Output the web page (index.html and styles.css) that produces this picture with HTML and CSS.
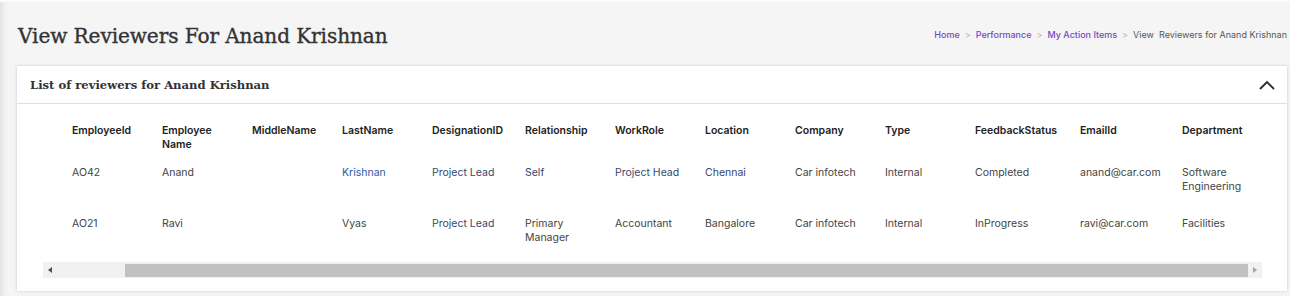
FILE: index.html
```html
<!DOCTYPE html>
<html>
<head>
<meta charset="utf-8">
<link rel="stylesheet" href="styles.css">
</head>
<body>
<div class="page">
  <div class="page-head">
    <h1 class="title">View Reviewers For Anand Krishnan</h1>
    <nav class="crumbs">
      <a class="crumb-link">Home</a><span class="sep">&gt;</span>
      <a class="crumb-link">Performance</a><span class="sep">&gt;</span>
      <a class="crumb-link">My Action Items</a><span class="sep">&gt;</span>
      <span class="crumb-current">View&nbsp; Reviewers for Anand Krishnan</span>
    </nav>
  </div>
  <section class="card">
    <header class="card-head">
      <h2 class="card-title">List of reviewers for Anand Krishnan</h2>
      <svg class="chev" width="16" height="10" viewBox="0 0 16 10"><path d="M1 9 L8 2 L15 9" fill="none" stroke="#2b2b2b" stroke-width="1.8"/></svg>
    </header>
    <div class="scroller">
      <div class="viewport">
        <table class="grid">
          <colgroup>
            <col class="c1"><col class="c2"><col class="c3"><col class="c4"><col class="c5"><col class="c6"><col class="c7"><col class="c8"><col class="c9"><col class="c10"><col class="c11"><col class="c12"><col class="c13">
          </colgroup>
          <thead>
            <tr>
              <th>EmployeeId</th><th>Employee Name</th><th>MiddleName</th><th>LastName</th><th>DesignationID</th><th>Relationship</th><th>WorkRole</th><th>Location</th><th>Company</th><th>Type</th><th>FeedbackStatus</th><th>EmailId</th><th>Department</th>
            </tr>
          </thead>
          <tbody>
            <tr>
              <td>AO42</td><td>Anand</td><td></td><td class="link">Krishnan</td><td class="blue">Project Lead</td><td class="blue">Self</td><td class="blue">Project Head</td><td class="blue">Chennai</td><td>Car infotech</td><td>Internal</td><td>Completed</td><td>anand@car.com</td><td>Software Engineering</td>
            </tr>
            <tr>
              <td>AO21</td><td>Ravi</td><td></td><td>Vyas</td><td class="blue">Project Lead</td><td>Primary Manager</td><td>Accountant</td><td>Bangalore</td><td>Car infotech</td><td>Internal</td><td>InProgress</td><td>ravi@car.com</td><td>Facilities</td>
            </tr>
          </tbody>
        </table>
      </div>
      <div class="hscroll">
        <span class="arrow arrow-left"></span>
        <div class="track"><div class="thumb"></div></div>
        <span class="arrow arrow-right"></span>
      </div>
    </div>
  </section>
</div>
</body>
</html>
```

FILE: styles.css
```css
html, body {
  margin: 0;
  padding: 0;
}
body {
  background: #f5f5f5;
  width: 1290px;
  height: 296px;
  overflow: hidden;
  box-shadow: inset 7px 0 6px -5px rgba(0,0,0,0.10);
  border-top: 2px solid #fbfbfb;
  box-sizing: border-box;
}
.page {
  padding: 0 2px 0 17px;
}
.page-head {
  display: flex;
  align-items: center;
  justify-content: space-between;
  height: 64px;
}
.title {
  margin: 3px 0 0 1px;
  font-family: "DejaVu Serif", serif;
  font-weight: normal;
  font-size: 20.1px;
  color: #333;
  letter-spacing: -0.1px;
  -webkit-text-stroke: 0.35px #333;
}
.crumbs {
  font-family: "Inter", sans-serif;
  font-size: 9px;
  display: flex;
  align-items: center;
  margin-right: 1px;
  margin-top: 0;
}
.crumb-link {
  color: #7349c4;
  font-weight: 500;
}
.sep {
  color: #b5b5b5;
  margin: 0 5px;
}
.crumb-current {
  color: #555;
}
.card {
  background: #fff;
  width: 1270px;
  box-shadow: 0 0 3px rgba(0,0,0,0.18);
  padding-bottom: 13px;
}
.card-head {
  height: 38px;
  border-bottom: 1px solid #dedede;
  display: flex;
  align-items: center;
  justify-content: space-between;
  padding: 0 12px 0 13px;
  box-sizing: border-box;
}
.card-title {
  margin: 0;
  font-family: "DejaVu Serif", serif;
  font-weight: bold;
  font-size: 11.6px;
  color: #333;
}
.chev {
  display: block;
  margin-top: 1px;
}
.scroller {
  margin: 0 25px 0 26px;
}
.viewport {
  overflow: hidden;
}
.grid {
  border-collapse: collapse;
  table-layout: fixed;
  width: 1200px;
  margin-left: 29px;
  font-family: "Inter", sans-serif;
  font-size: 10.5px;
  color: #444;
}
.c1, .c2, .c3, .c4, .c6, .c7, .c8, .c9, .c10 { width: 90px; }
.c5 { width: 93px; }
.c11 { width: 105px; }
.c12 { width: 102px; }
.c13 { width: 90px; }
.grid th {
  text-align: left;
  font-weight: 600;
  color: #222;
  line-height: 14px;
  padding: 20px 10px 6px 0;
  vertical-align: top;
}
.grid td {
  line-height: 14px;
  padding: 8px 10px 15px 0;
  vertical-align: top;
}
.grid .link {
  color: #2d5aa6;
}
.grid .blue {
  color: #34466e;
}
.hscroll {
  margin-top: 2px;
  height: 16px;
  background: #f1f1f1;
  display: flex;
  align-items: center;
}
.arrow {
  width: 14px;
  height: 16px;
  position: relative;
  flex: none;
}
.arrow::after {
  content: "";
  position: absolute;
  top: 5px;
  width: 0;
  height: 0;
  border-top: 3px solid transparent;
  border-bottom: 3px solid transparent;
}
.arrow-left::after {
  left: 5px;
  border-right: 4px solid #505050;
}
.arrow-right::after {
  left: 5px;
  border-left: 4px solid #a3a3a3;
}
.track {
  flex: 1;
  height: 13px;
  padding-left: 68px;
}
.thumb {
  height: 13px;
  background: #c1c1c1;
}
```
